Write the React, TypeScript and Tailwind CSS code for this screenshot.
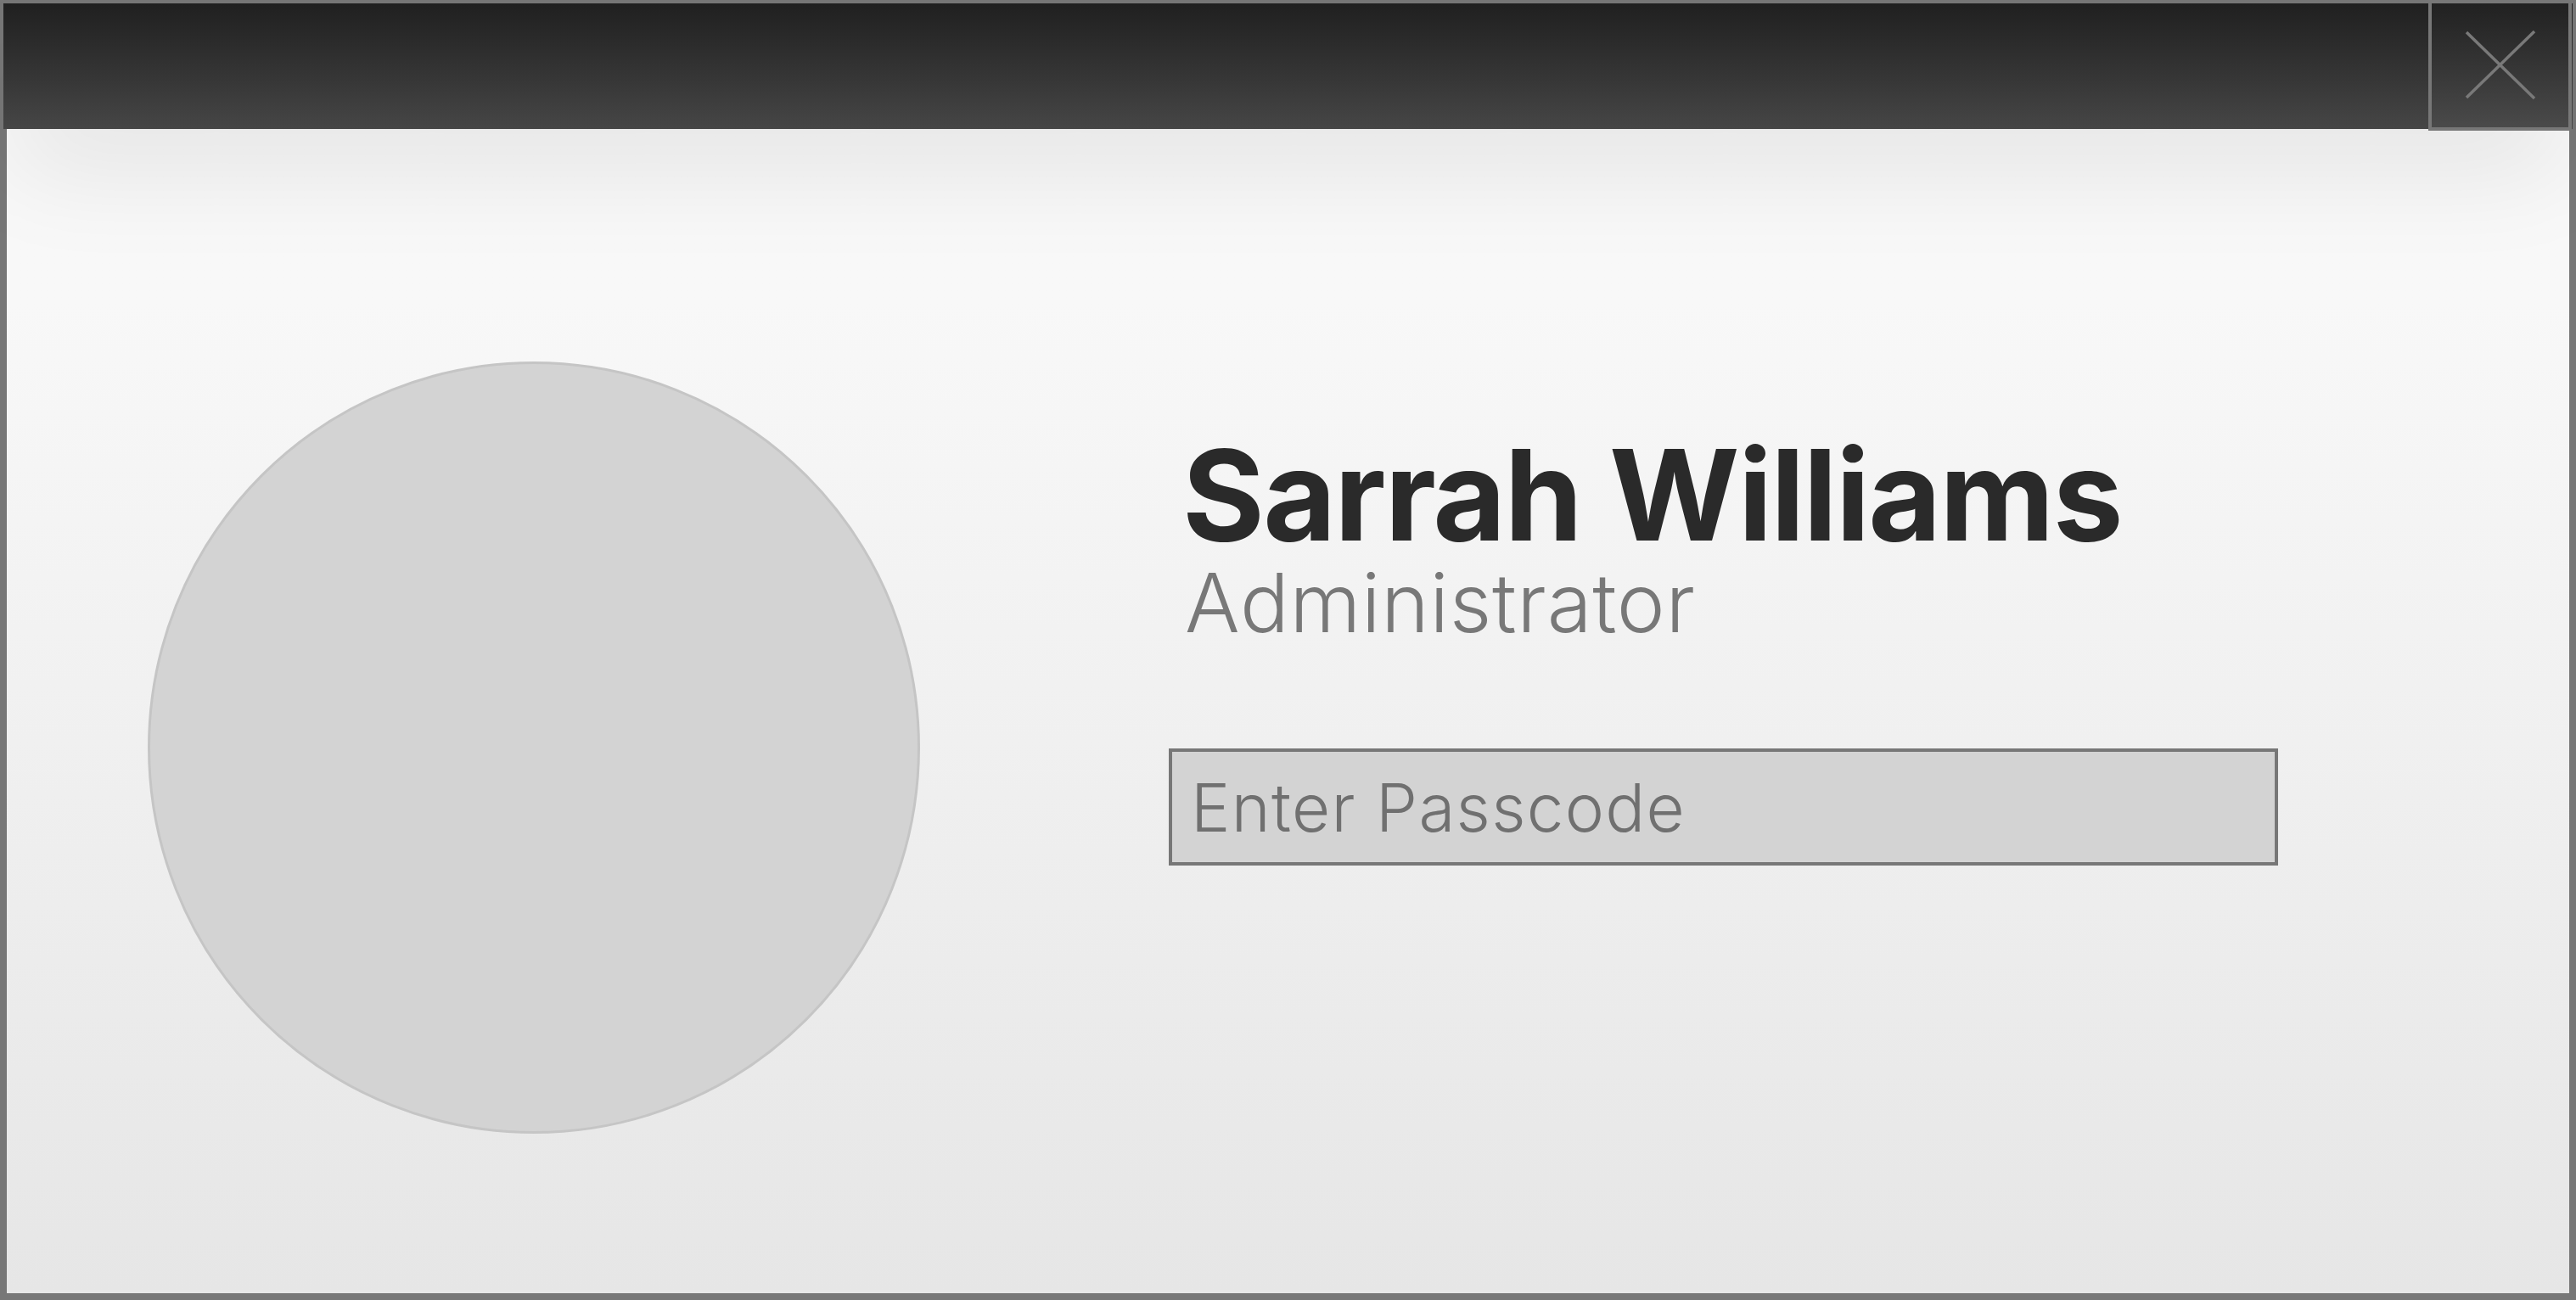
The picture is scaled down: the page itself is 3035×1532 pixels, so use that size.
import React from 'react';

function CloseButton() {
  return (
    <button
      type="button"
      aria-label="Close"
      className="absolute top-0 right-[5px] z-20 flex h-[154px] w-[169px] items-center justify-center border-4 border-[#777777] bg-gradient-to-b from-[#212121] to-[#4a4a4a]"
    >
      <svg width="84" height="82" viewBox="0 0 84 82" fill="none">
        <path d="M2 2 L82 80 M82 1 L2 79" stroke="#797979" strokeWidth="3.5" />
      </svg>
    </button>
  );
}

export default function App() {
  return (
    <div className="relative flex h-[1532px] w-[3035px] flex-col bg-[#777777] p-[4px] font-['Inter','Noto_Sans',sans-serif]">
      {/* Title bar */}
      <div className="relative z-10 h-[148px] shrink-0 bg-gradient-to-b from-[#202020] to-[#464646] shadow-[0_60px_120px_-10px_rgba(0,0,0,0.08)]" />
      <CloseButton />

      {/* Body */}
      <main className="mx-[4px] mb-[4px] flex flex-1 items-start bg-gradient-to-b from-[#f8f8f8] from-[15%] to-[#e6e6e6] pl-[166px] pt-[274px]">
        <div className="h-[910px] w-[910px] shrink-0 rounded-full border-[3px] border-[#c5c5c5] bg-[#d3d3d3]" />

        <div className="ml-[293px] flex flex-col pt-[84px]">
          <h1 className="pl-[16px] text-[148px] font-bold leading-none tracking-[-0.012em] text-[#2a2a2a]">
            Sarrah Williams
          </h1>
          <p className="mt-[4px] pl-[19px] text-[96px] font-light leading-none tracking-[0.008em] text-[#787878]">
            Administrator
          </p>
          <div className="mt-[124px] flex h-[138px] w-[1307px] items-center border-4 border-[#777777] bg-[#d3d3d3] pl-[22px]">
            <input
              type="password"
              placeholder="Enter Passcode"
              className="w-full bg-transparent text-[78px] font-light leading-none tracking-[0.017em] text-[#707070] outline-none placeholder:text-[#707070]"
            />
          </div>
        </div>
      </main>
    </div>
  );
}
